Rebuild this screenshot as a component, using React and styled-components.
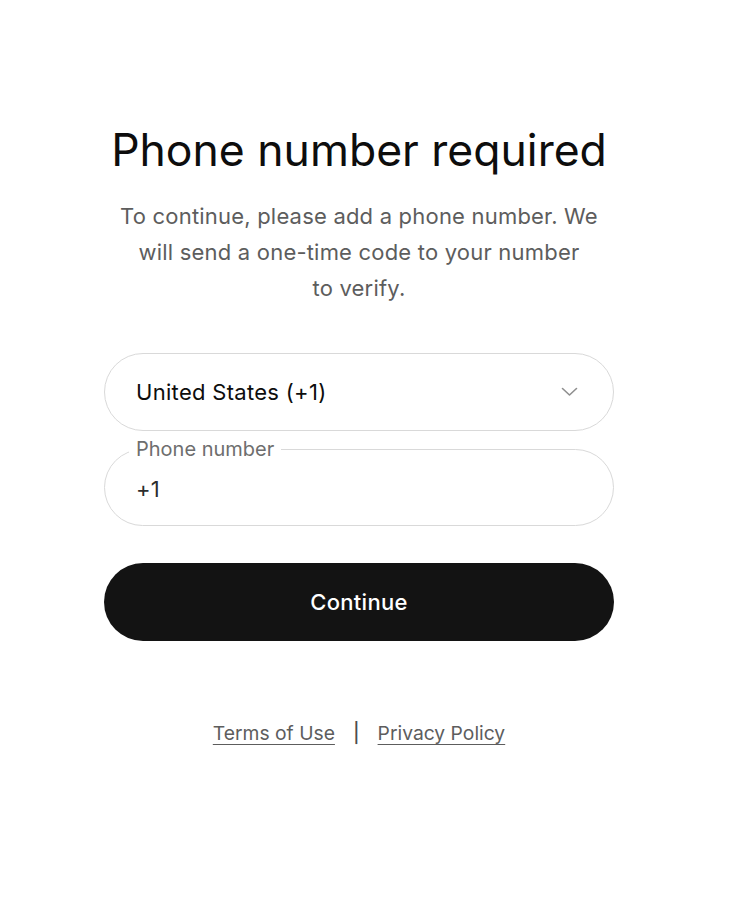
import React from 'react'
import styled, { createGlobalStyle } from 'styled-components'

const GlobalStyle = createGlobalStyle`
  html, body {
    margin: 0;
    padding: 0;
    background: #ffffff;
  }
  body {
    font-family: Inter, "Noto Sans", "Liberation Sans", sans-serif;
    color: #0d0d0d;
  }
`

const ChevronDown = () => (
  <svg width="17" height="10" viewBox="0 0 17 10" fill="none">
    <path d="M1.5 1.5 L8.5 8 L15.5 1.5" stroke="#8f8f8f" strokeWidth="1.6" strokeLinecap="round" strokeLinejoin="round" />
  </svg>
)

const App = () => {
  return (
    <>
      <GlobalStyle />
      <Page>
        <Card>
          <Title>Phone number required</Title>
          <Subtitle>
            To continue, please add a phone number. We
            <br />
            will send a one-time code to your number
            <br />
            to verify.
          </Subtitle>

          <Form>
            <Select>
              <span>United States (+1)</span>
              <ChevronDown />
            </Select>

            <Field>
              <Legend>Phone number</Legend>
              <Input defaultValue="+1" />
            </Field>

            <Button type="button">Continue</Button>
          </Form>

          <Footer>
            <FooterLink href="#">Terms of Use</FooterLink>
            <Divider>|</Divider>
            <FooterLink href="#">Privacy Policy</FooterLink>
          </Footer>
        </Card>
      </Page>
    </>
  )
}

export default App

const Page = styled.div`
  width: 718px;
  min-height: 906px;
  display: flex;
  justify-content: center;
`

const Card = styled.div`
  width: 510px;
  padding-top: 122px;
  display: flex;
  flex-direction: column;
  align-items: center;
`

const Title = styled.h1`
  margin: 0;
  font-size: 44.5px;
  font-weight: 400;
  letter-spacing: 0;
  line-height: 56px;
  color: #0d0d0d;
  text-align: center;
`

const Subtitle = styled.p`
  margin: 20px 0 0;
  font-size: 22px;
  letter-spacing: 0.2px;
  line-height: 36px;
  color: #5d5d5d;
  text-align: center;
`

const Form = styled.div`
  margin-top: 47px;
  width: 100%;
  display: flex;
  flex-direction: column;
`

const Select = styled.div`
  box-sizing: border-box;
  height: 78px;
  border: 1px solid #d9d9d9;
  border-radius: 39px;
  padding: 0 35px 0 31px;
  display: flex;
  align-items: center;
  justify-content: space-between;
  font-size: 22px;
  letter-spacing: 0.3px;
  color: #0d0d0d;
`

const Field = styled.fieldset`
  box-sizing: border-box;
  margin: 7px 0 0;
  height: 88px;
  border: 1px solid #d9d9d9;
  border-radius: 39px;
  padding: 17px 31px 0;
`

const Legend = styled.legend`
  padding: 0 7px;
  margin-left: -7px;
  font-size: 20px;
  line-height: 22px;
  color: #6e6e6e;
`

const Input = styled.input`
  display: block;
  border: none;
  outline: none;
  background: transparent;
  width: 100%;
  height: 24px;
  padding: 0;
  font-family: inherit;
  font-size: 22px;
  letter-spacing: 0.3px;
  color: #2d2d2d;
`

const Button = styled.button`
  margin-top: 37px;
  height: 78px;
  border: none;
  border-radius: 39px;
  background: #131313;
  color: #ffffff;
  font-family: inherit;
  font-size: 22px;
  letter-spacing: 0.3px;
  font-weight: 500;
  cursor: pointer;
`

const Footer = styled.div`
  margin-top: 80px;
  display: flex;
  align-items: center;
  gap: 18px;
  font-size: 19.3px;
  color: #5d5d5d;
`

const FooterLink = styled.a`
  color: #5d5d5d;
  text-decoration: underline;
  text-underline-offset: 4px;
`

const Divider = styled.span`
  color: #4d4d4d;
  font-weight: 500;
`
